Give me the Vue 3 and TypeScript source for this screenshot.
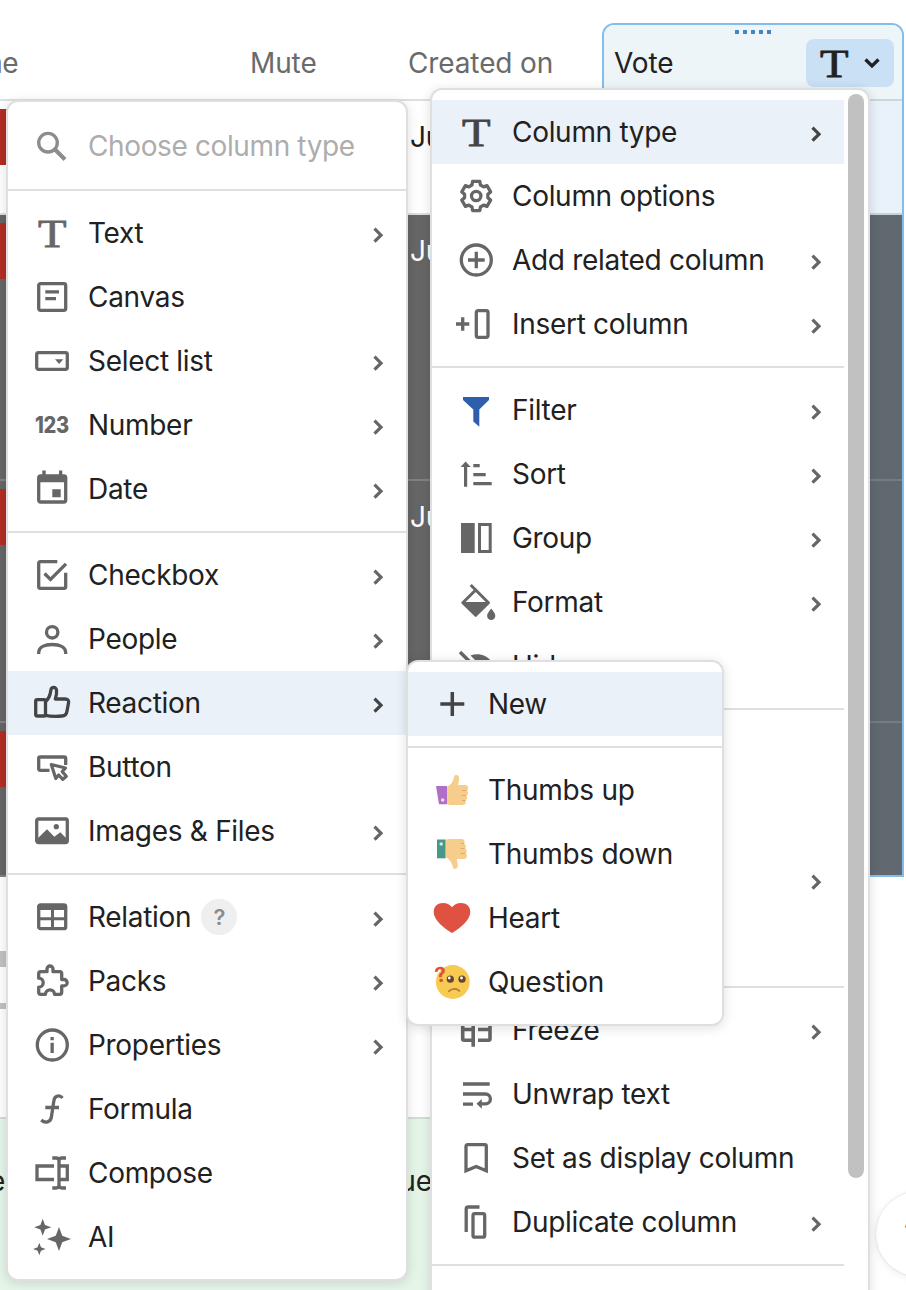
<script setup lang="ts">
import { computed, defineComponent, h } from 'vue'

interface Item {
  icon?: string
  label?: string
  more?: boolean
  active?: boolean
  help?: boolean
}

function gearPath(): string {
  const pts: string[] = []
  for (let k = 0; k < 6; k++) {
    const a = -90 + k * 60
    const ring: [number, number][] = [[-21, 11.8], [-14, 15], [14, 15], [21, 11.8]]
    for (const [d, r] of ring) {
      const t = ((a + d) * Math.PI) / 180
      pts.push(`${(20.2 + r * Math.cos(t)).toFixed(2)} ${(20 + r * Math.sin(t)).toFixed(2)}`)
    }
  }
  return `M${pts.join('L')}Z`
}

function star(cx: number, cy: number, r: number): string {
  const w = r * 0.27
  return `<path d="M${cx} ${cy - r}L${cx + w} ${cy - w}L${cx + r} ${cy}L${cx + w} ${cy + w}L${cx} ${cy + r}L${cx - w} ${cy + w}L${cx - r} ${cy}L${cx - w} ${cy - w}Z" fill="currentColor"/>`
}

const S = 'fill="none" stroke="currentColor" stroke-width="3.3"'
const F = 'fill="currentColor"'

const hand = `<path fill="#f7cd8b" d="M15 17C18 15.5 21.5 11.500 22 7C22.300 4.300 26.300 4.500 27 7.300C27.400 9.800 26.500 12.500 26 15H33C36.800 15 37 19.500 35 20.300C36.600 22 36.500 24.700 34.500 25.300C35.800 27 35.400 29.500 33.500 30.300C34.500 32.500 33.500 35 31 35H20C17.500 35 16 34.500 15 34Z"/><path d="M30 20.500H34.500M30 25.500H34M30 30.500H33.500" stroke="#e3a869" stroke-width="1" fill="none"/>`

const icons: Record<string, string> = {
  text: `<text transform="translate(20.200 33.700) scale(1.140 1)" text-anchor="middle" font-family="'Liberation Serif', serif" font-size="41" fill="currentColor" stroke="currentColor" stroke-width=".8">T</text>`,
  search: `<circle cx="16" cy="16.700" r="9.300" ${S}/><path d="M22.500 23L33 33.500" fill="none" stroke="currentColor" stroke-width="4"/>`,
  canvas: `<rect x="6.700" y="6.700" width="27" height="26.600" rx="1.800" ${S}/><path ${F} d="M13.300 13.300H27V16.500H13.300zM13.300 20H24V23.300H13.300z"/>`,
  select: `<rect x="4.700" y="11.700" width="30.600" height="16.700" rx="1.800" ${S}/><path ${F} d="M23 18.300H31.300L27.100 23z"/>`,
  number: `<text x="3" y="28.300" textLength="34" lengthAdjust="spacingAndGlyphs" font-family="Inter, sans-serif" font-weight="800" font-size="22.500" fill="currentColor">123</text>`,
  date: `<rect x="6.700" y="7" width="27" height="26" rx="1.800" ${S}/><path ${F} d="M6 6H34V13.300H6zM10.300 1.500H13.700V7H10.300zM27 1.500H30.300V7H27zM20.300 20.200H28.700V28.300H20.300z"/>`,
  checkbox: `<path ${S} d="M25.300 6.700H8.200Q6.700 6.700 6.700 8.200V31.800Q6.700 33.300 8.200 33.300H32.200Q33.700 33.300 33.700 31.800V17.700M12.500 18.500L18.500 24.500L34 8.800"/>`,
  people: `<circle cx="20.200" cy="13.300" r="5.700" ${S}/><path ${S} d="M6.700 35V33.500C6.700 28 13 25.500 20.200 25.500S33.700 28 33.700 33.500V35"/>`,
  reaction: `<g ${S} stroke-linejoin="round"><rect x="3.700" y="16.700" width="9.800" height="16.300" rx="1.500"/><path d="M13.500 18.500C16 16.500 18.300 12 18.800 7.500C19.200 3.500 23.500 3.300 24.500 7C25 10 24.500 12.500 23.300 16H33C36 16 37 17.500 36.500 20L35 28C34.500 31.500 33 33 30 33C25 33.400 18 33.400 13.500 32.300"/></g>`,
  button: `<path ${S} d="M17.500 23.300H8.200Q6.700 23.300 6.700 21.800V11.500Q6.700 10 8.200 10H32.200Q33.700 10 33.700 11.500V18"/><path fill="none" stroke="currentColor" stroke-width="3.200" stroke-linejoin="round" d="M19.300 17.500L33.500 21L30.200 24.600L34.300 29.200L30.800 32.400L26.700 28L23.800 31.500Z"/>`,
  image: `<rect x="4.700" y="8" width="30.600" height="23.500" rx="1.800" ${S}/><path ${F} d="M5 28L15 18.300L22.300 25.700L28.300 21.300L35 28V32H5z"/><circle cx="24.300" cy="15.700" r="2.600" ${F}/>`,
  relation: `<rect x="6.700" y="8" width="27" height="23.700" rx="1.800" ${S}/><path ${F} d="M6 7H34V13H6zM6 20.200H34V23.300H6zM19 12H22V32H19z"/>`,
  packs: `<path ${S} stroke-linejoin="round" d="M8.700 10.700H15V8a3 3 0 0 1 6 0V10.700H27.700a2 2 0 0 1 2 2V18.500H32a3 3 0 0 1 0 6.300H29.700V31.300a2 2 0 0 1-2 2H22.500a4.500 4.500 0 0 0-9 0H8.700a2 2 0 0 1-2-2V26.200a4.500 4.500 0 0 0 0-9V12.700a2 2 0 0 1 2-2z"/>`,
  info: `<circle cx="20.300" cy="20" r="15" ${S}/><path ${F} d="M18.500 12H21.800V15.200H18.500zM18.500 17.700H21.800V28H18.500z"/>`,
  formula: `<path ${S} d="M30.500 9C28 6 22.500 5.800 21.800 12L19.500 27.500C18.800 33.500 13 34.500 9.300 31M13.300 18.500H27"/>`,
  compose: `<path ${S} d="M22 13H5V26.500H22M27 13H35.300V26.500H27M27 7V33M20.300 5H24Q27 5 27 8Q27 5 30 5H34M20.300 35H24Q27 35 27 32Q27 35 30 35H34"/>`,
  ai: star(27, 22, 12) + star(10.7, 10.3, 8.5) + star(7.3, 32, 6.2),
  gear: `<path ${S} stroke-linejoin="round" d="${gearPath()}"/><circle cx="20.200" cy="20" r="4.700" ${S}/>`,
  add: `<circle cx="20.300" cy="20" r="15" ${S}/><path ${S} d="M12 20H28.700M20.300 11.700V28.300"/>`,
  insert: `<path ${S} d="M0 20H13.300M6.700 13.300V26.700"/><rect x="20.300" y="6.700" width="11.700" height="26.700" rx="1.800" ${S}/>`,
  filter: `<path fill="#2d5fac" d="M7 7H33V10L23.300 19.500V36.700L17.300 31.500V19.500L7 10z"/>`,
  sort: `<path ${F} d="M9.600 7.500L14.800 13H11.200V32.700H8V13H4.500zM17.300 10H23.700V13.200H17.300zM17.300 19H29.700V22.200H17.300zM17.300 28H35.700V31.200H17.300z"/>`,
  group: `<path ${F} d="M5 5H18.700V35H5z"/><rect x="23.500" y="6.500" width="10.700" height="27" fill="none" stroke="currentColor" stroke-width="3"/>`,
  format: `<path fill="none" stroke="currentColor" stroke-width="3" stroke-linejoin="round" d="M14.700 3L19.700 8L32.500 20.700L19.700 33.300L6.800 20.700L19.700 8"/><path ${F} d="M6.500 20H33L19.700 34zM35.200 26.500C37.500 29.500 39.300 31.500 39.300 33.700A4.100 4.300 0 0 1 31.100 33.700C31.100 31.500 33 29.500 35.200 26.500z"/>`,
  hide: `<path ${S} d="M4 6L34 36"/><path ${F} d="M14.500 9.500C22 6.500 30.500 9 35 15L32 22L24 19L18 13z"/>`,
  freeze: `<path fill="none" stroke="currentColor" stroke-width="3.600" d="M17.200 3V36.700M17 8.500H8.200Q6.700 8.500 6.700 10V28.700Q6.700 30.200 8.200 30.200H17M7 19.500H17M22 8.500H32.500Q34 8.500 34 10V28.700Q34 30.200 32.500 30.200H22M22 19.500H34"/>`,
  wrap: `<path ${S} d="M7 10H33.700M7 20H29.500A4.700 4.700 0 0 1 29.500 29.800H24.500M7 30.200H17"/><path ${F} d="M20.500 29.800L25.800 25V34.700z"/>`,
  bookmark: `<path ${S} d="M10 32.800V8.200Q10 6.700 11.500 6.700H28.800Q30.300 6.700 30.300 8.200V32.800L20.200 28.500z"/>`,
  duplicate: `<rect x="17" y="11.700" width="11.700" height="23.500" rx="1.800" ${S}/><path ${S} d="M10.200 30V7Q10.200 5 12.200 5H23.500"/>`,
  plus: `<path d="M8.300 20H32.300M20.300 8V32" fill="none" stroke="currentColor" stroke-width="3.500"/>`,
  thumbsUp: `<path fill="#b06fc6" d="M4 16H15V34.300H7z"/><circle cx="10.700" cy="30" r="1.800" fill="#eddcf2"/>${hand}`,
  thumbsDown: `<path fill="#489889" d="M5 5.500H13.700V24.300H5z"/><circle cx="9.200" cy="10" r="1.800" fill="#d0e8e2"/><g transform="translate(-1.300 40) scale(1 -1)">${hand}</g>`,
  heart: `<path fill="#df5241" d="M20 35C13 31 1.700 22.500 1.700 14C1.700 8 6 5 11 5C15 5 18.500 7 20 9.300C21.500 7 25 5 29 5C34 5 38.300 8 38.300 14C38.300 22.500 27 31 20 35z"/>`,
  question: `<circle cx="20.800" cy="20" r="16.900" fill="#f7ca51"/><circle cx="18.300" cy="17.200" r="3.600" fill="#67442c"/><circle cx="30" cy="17.200" r="3.600" fill="#67442c"/><circle cx="17.300" cy="16" r="1.400" fill="#fff"/><circle cx="29.500" cy="16" r="1.400" fill="#fff"/><path d="M16.500 30C18.500 26.200 25 25.800 27.800 29.500" fill="none" stroke="#b5793a" stroke-width="1.600"/><text transform="translate(9.800 19.800) rotate(-10)" font-family="Inter, sans-serif" font-weight="700" font-size="20.500" text-anchor="middle" fill="#df4f3c">?</text>`,
}

const Glyph = defineComponent({
  props: { name: { type: String, required: true } },
  setup(props) {
    const body = computed(() => icons[props.name] ?? '')
    return () => h('svg', { width: 40, height: 40, viewBox: '0 0 40 40', overflow: 'visible', innerHTML: body.value })
  },
})

const typeGroups: Item[][] = [
  [
    { icon: 'text', label: 'Text', more: true },
    { icon: 'canvas', label: 'Canvas' },
    { icon: 'select', label: 'Select list', more: true },
    { icon: 'number', label: 'Number', more: true },
    { icon: 'date', label: 'Date', more: true },
  ],
  [
    { icon: 'checkbox', label: 'Checkbox', more: true },
    { icon: 'people', label: 'People', more: true },
    { icon: 'reaction', label: 'Reaction', more: true, active: true },
    { icon: 'button', label: 'Button' },
    { icon: 'image', label: 'Images & Files', more: true },
  ],
  [
    { icon: 'relation', label: 'Relation', more: true, help: true },
    { icon: 'packs', label: 'Packs', more: true },
    { icon: 'info', label: 'Properties', more: true },
    { icon: 'formula', label: 'Formula' },
    { icon: 'compose', label: 'Compose' },
    { icon: 'ai', label: 'AI' },
  ],
]

const columnGroups: Item[][] = [
  [
    { icon: 'text', label: 'Column type', more: true, active: true },
    { icon: 'gear', label: 'Column options' },
    { icon: 'add', label: 'Add related column', more: true },
    { icon: 'insert', label: 'Insert column', more: true },
  ],
  [
    { icon: 'filter', label: 'Filter', more: true },
    { icon: 'sort', label: 'Sort', more: true },
    { icon: 'group', label: 'Group', more: true },
    { icon: 'format', label: 'Format', more: true },
    { icon: 'hide', label: 'Hide' },
  ],
  [{}, {}, { more: true }, {}],
  [
    { icon: 'freeze', label: 'Freeze', more: true },
    { icon: 'wrap', label: 'Unwrap text' },
    { icon: 'bookmark', label: 'Set as display column' },
    { icon: 'duplicate', label: 'Duplicate column', more: true },
  ],
  [{}],
]

const reactionGroups: Item[][] = [
  [{ icon: 'plus', label: 'New', active: true }],
  [
    { icon: 'thumbsUp', label: 'Thumbs up' },
    { icon: 'thumbsDown', label: 'Thumbs down' },
    { icon: 'heart', label: 'Heart' },
    { icon: 'question', label: 'Question' },
  ],
]

const menus = [
  { id: 'column', groups: columnGroups },
  { id: 'type', groups: typeGroups },
  { id: 'reaction', groups: reactionGroups },
]
</script>

<template>
  <div class="page">
    <div class="table">
      <div class="main-columns">
        <div class="head">
          <span class="col-name">Name</span>
          <span class="col-mute">Mute</span>
          <span class="col-created">Created on</span>
        </div>
        <div class="row first"><i class="pill" /><span class="date">Ju</span></div>
        <div class="row second"><i class="pill" /><span class="date">Ju</span></div>
        <div class="row third"><i class="pill" /><span class="date">Ju</span></div>
        <div class="row fourth"><i class="pill" /></div>
      </div>
      <div class="vote">
        <div class="vote-head">
          <span class="grip"><i v-for="n in 5" :key="n" /></span>
          <span class="vote-label">Vote</span>
          <span class="type-button">
            <Glyph name="text" />
            <svg width="18" height="12" viewBox="0 0 18 12"><path d="M2.500 2.500L9 9L15.500 2.500" fill="none" stroke="currentColor" stroke-width="3.300" /></svg>
          </span>
        </div>
        <div class="vote-cell first" />
        <div class="vote-cell second" />
        <div class="vote-cell third" />
        <div class="vote-cell fourth" />
      </div>
    </div>
    <div class="below">
      <i class="bar thick" />
      <i class="bar thin" />
    </div>
    <div class="callout"><span>e</span><span>ue</span></div>

    <div class="fab"><span>?</span></div>

    <div v-for="menu in menus" :key="menu.id" class="menu" :class="menu.id">
      <div v-if="menu.id === 'type'" class="search">
        <Glyph name="search" /><span>Choose column type</span>
      </div>
      <div v-for="(group, g) in menu.groups" :key="g" class="group">
        <div v-for="(item, i) in group" :key="i" class="item" :class="{ active: item.active }">
          <Glyph v-if="item.icon" :name="item.icon" />
          <span class="label">{{ item.label }}</span>
          <span v-if="item.help" class="help">?</span>
          <svg v-if="item.more" class="chevron" width="12" height="18" viewBox="0 0 12 18">
            <path d="M2.500 2.700L9 9.200L2.500 15.700" fill="none" stroke="currentColor" stroke-width="3.200" />
          </svg>
        </div>
      </div>
      <i v-if="menu.id === 'column'" class="scrollbar" />
    </div>
  </div>
</template>

<style>
body { margin: 0; overflow: hidden; }
</style>

<style scoped>
.page {
  position: relative;
  width: 906px;
  height: 1290px;
  overflow: hidden;
  background: #fff;
  color: #212121;
  font: 400 28px/40px Inter, sans-serif;
  letter-spacing: -0.12px;
}
.page * { box-sizing: border-box; }
.table { display: flex; height: 877px; }
.main-columns { width: 602px; }
.head {
  display: flex;
  height: 101px;
  padding-top: 43px;
  border-bottom: 2px solid #dedede;
  color: #6a6a6a;
}
.col-name {
  display: flex;
  justify-content: flex-end;
  width: 18px;
  margin-right: 232px;
  letter-spacing: -0.6px;
  white-space: nowrap;
}
.col-mute { width: 158px; }
.row {
  display: flex;
  justify-content: space-between;
  padding: 8px 140px 0 0;
  border-bottom: 2px solid #828282;
  background: #666;
  color: #fff;
}
.row.first { height: 114px; background: #fff; color: #212121; border-color: #dedede; }
.second { height: 266px; }
.third { height: 242px; }
.fourth { height: 154px; }
.pill { width: 100px; height: 56px; background: #b32d25; }
.date { width: 52px; padding-top: 8px; }
.vote {
  width: 302px;
  height: 854px;
  margin-top: 23px;
  border: 2px solid #83bdec;
  border-radius: 12px 12px 0 0;
  overflow: hidden;
}
.vote-head {
  position: relative;
  display: flex;
  align-items: flex-start;
  justify-content: space-between;
  height: 76px;
  padding: 14px 8px 0 10px;
  border-bottom: 2px solid #cfd5d8;
  background: #edf5f8;
}
.vote-label { padding-top: 4px; }
.grip { position: absolute; top: 5px; left: 131px; display: flex; gap: 4px; }
.grip i { width: 4px; height: 4px; background: #4583c4; }
.type-button {
  display: flex;
  align-items: center;
  gap: 9px;
  width: 88px;
  height: 48px;
  padding-left: 8px;
  border-radius: 8px;
  background: #c9e0f5;
}
.vote-cell { background: #61686f; border-bottom: 2px solid #757c84; }
.vote-cell.first { height: 114px; background: #e9f1fa; border-color: #c9d1d9; }
.vote-cell.fourth { border: 0; }
.below { height: 240px; padding-top: 74px; }
.bar { display: block; width: 200px; background: #c1c1c1; }
.bar.thick { height: 16px; margin-bottom: 36px; }
.bar.thin { height: 6px; }
.callout {
  display: flex;
  justify-content: space-between;
  width: 640px;
  height: 180px;
  padding: 42px 208px 0 0;
  border-top: 2px solid #cfe0d2;
  background: #e5f5e8;
}
.callout span:first-child { margin-left: -11px; }
.fab {
  position: absolute;
  left: 876px;
  top: 1192px;
  width: 84px;
  height: 84px;
  padding: 22px 0 0 28px;
  border-radius: 50%;
  background: #fff;
  box-shadow: 0 0 3px rgba(0, 0, 0, 0.12), 0 2px 10px rgba(0, 0, 0, 0.07);
  font-size: 34px;
}
.menu {
  position: absolute;
  border: 2px solid #dfdfdf;
  border-radius: 12px;
  background: #fff;
  box-shadow: 0 2px 12px rgba(0, 0, 0, 0.13);
  letter-spacing: -0.3px;
}
.menu.column { left: 430px; top: 88px; width: 440px; height: 1260px; padding-right: 24px; }
.menu.type { left: 6px; top: 100px; width: 402px; height: 1181px; }
.menu.reaction { left: 406px; top: 660px; width: 318px; height: 366px; }
.search {
  display: flex;
  align-items: center;
  gap: 16px;
  height: 89px;
  padding-left: 24px;
  border-bottom: 2px solid #dfdfdf;
  color: #8c8c8c;
}
.search span { color: #adadad; letter-spacing: -0.38px; }
.group { padding: 10px 0; }
.group + .group { border-top: 2px solid #dfdfdf; }
.item {
  display: flex;
  align-items: center;
  height: 64px;
  padding: 0 22px 0 24px;
  color: #666;
}
.item.active { background: #eaf1f9; color: #444; }
.label { margin-left: 16px; color: #212121; white-space: nowrap; }
.chevron { margin: 4px 0 0 auto; }
.help {
  width: 36px;
  height: 36px;
  margin-left: 10px;
  border-radius: 50%;
  background: #efefef;
  color: #8c8c8c;
  font-size: 22px;
  font-weight: 600;
  line-height: 36px;
  text-align: center;
}
.scrollbar {
  position: absolute;
  left: 416px;
  top: 4px;
  width: 16px;
  height: 1084px;
  border-radius: 8px;
  background: #c1c1c1;
}
.vote-cell.second { height: 266px; }
.vote-cell.third { height: 242px; }
.vote-cell.fourth { height: 152px; }
</style>
